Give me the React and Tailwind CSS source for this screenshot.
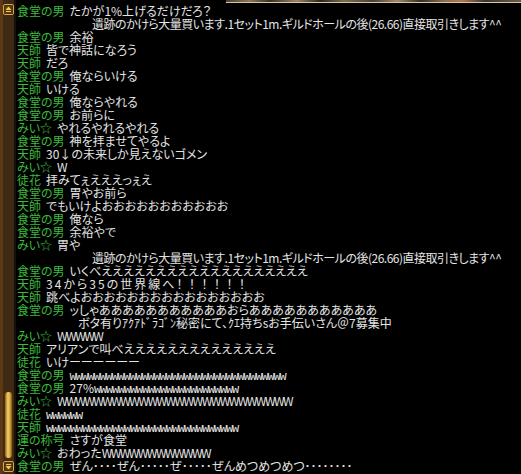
import React from 'react';

const lines = [
  { name: '食堂の男', text: 'たかが1%上げるだけだろ？' },
  { indent: 92, cls: 'tracking-[-0.5px]', text: '遺跡のかけら大量買います.1セット1m.ギルドホールの後(26.66)直接取引きします^^' },
  { name: '食堂の男', text: '余裕' },
  { name: '天師', text: '皆で神話になろう' },
  { name: '天師', text: 'だろ' },
  { name: '食堂の男', text: '俺ならいける' },
  { name: '天師', text: 'いける' },
  { name: '食堂の男', text: '俺ならやれる' },
  { name: '食堂の男', text: 'お前らに' },
  { name: 'みい☆', text: 'やれるやれるやれる' },
  { name: '食堂の男', text: '神を拝ませてやるよ' },
  { name: '天師', text: '30↓の未来しか見えないゴメン' },
  { name: 'みい☆', text: 'W' },
  { name: '徒花', text: '拝みてぇえええっぇえ' },
  { name: '食堂の男', text: '胃やお前ら' },
  { name: '天師', text: 'でもいけよおおおおおおおおおおお' },
  { name: '食堂の男', text: '俺なら' },
  { name: '食堂の男', text: '余裕やで' },
  { name: 'みい☆', text: '胃や' },
  { indent: 92, cls: 'tracking-[-0.5px]', text: '遺跡のかけら大量買います.1セット1m.ギルドホールの後(26.66)直接取引きします^^' },
  { name: '食堂の男', text: 'いくべえええええええええええええええええええ' },
  { name: '天師', cls: 'tracking-[2px]', text: '34から35の世界線へ！！！！！！' },
  { name: '天師', text: '跳べよおおおおおおおおおおおおおおおお' },
  { name: '食堂の男', text: 'ッしゃあああああああああああおらあああああああああああ' },
  { indent: 78, text: 'ボタ有りｱｸｱﾄﾞﾗｺﾞﾝ秘密にて、ｸｴ持ちsお手伝いさん＠7募集中' },
  { name: 'みい☆', text: 'WWWWW' },
  { name: '天師', text: 'アリアンで叫べええええええええええええええ' },
  { name: '徒花', text: 'いけーーーーーー' },
  { name: '食堂の男', text: 'wwwwwwwwwwwwwwwwwwwwwwwwwwwwwwwwwwww' },
  { name: '食堂の男', text: '27%wwwwwwwwwwwwwwwwwwwwwwww' },
  { name: 'みい☆', text: 'WWWWWWWWWWWWWWWWWWWWWWWWWW' },
  { name: '徒花', text: 'wwwwww' },
  { name: '天師', text: 'wwwwwwwwwwwwwwwwwwwwwwwwwwwwwwww' },
  { name: '運の称号', text: 'さすが食堂' },
  { name: 'みい☆', text: 'おわったWWWWWWWWWWWW' },
  { name: '食堂の男', text: 'ぜん････ぜん･････ぜ･････ぜんめつめつめつ････････' },
];

// w の連打は細い等幅で、W は少し詰める。！は全角幅に広げる
const renderText = (t) =>
  t.split(/(w+|W+|！+)/).map((s, i) => {
    if (/^w+$/.test(s)) {
      return (
        <span key={i} className="font-['Liberation_Mono',monospace] tracking-[-1.2px]">
          {s}
        </span>
      );
    }
    if (/^W+$/.test(s)) {
      return (
        <span key={i} className="tracking-[-1.5px]">
          {s}
        </span>
      );
    }
    if (/^！+$/.test(s)) {
      return (
        <span key={i} className="tracking-[6.5px]">
          {s}
        </span>
      );
    }
    return <React.Fragment key={i}>{s}</React.Fragment>;
  });

const ArrowButton = ({ down }) => (
  <svg width="11" height="11" viewBox="0 0 11 11" className="block">
    <rect x="0.5" y="0.5" width="10" height="10" rx="1.5" fill="#3a2608" stroke="#d6a848" />
    <rect x="1.5" y="1.5" width="8" height="8" rx="1" fill="#5a3c10" />
    {down ? (
      <>
        <rect x="3" y="3" width="5" height="1" fill="#f0c860" />
        <path d="M2.5 5 H8.5 L5.5 8.5 Z" fill="#f0c860" />
      </>
    ) : (
      <>
        <path d="M2.5 6 H8.5 L5.5 2.5 Z" fill="#f0c860" />
        <rect x="3" y="7" width="5" height="1" fill="#f0c860" />
      </>
    )}
  </svg>
);

const Scrollbar = () => (
  <div className="w-[16px] h-full flex shrink-0">
    <div className="w-[3px] h-full bg-[#5c3814]" />
    <div className="w-[11px] h-full bg-[#3e2a14] flex flex-col items-center pt-[4px] pb-[2px]">
      <ArrowButton />
      <div className="flex-1 w-full flex flex-col justify-end items-center pb-[2px]">
        <div className="w-[9px] h-[68px] rounded-[4px] border border-[#4a3008] bg-[linear-gradient(90deg,#8a6018,#f2cc68_40%,#d8a840_70%,#7a5410)]" />
      </div>
      <ArrowButton down />
    </div>
    <div className="w-[2px] h-full bg-[#17110a]" />
  </div>
);

const App = () => {
  return (
    <div className="w-[521px] h-[474px] bg-black flex overflow-hidden font-['Noto_Sans_CJK_JP',sans-serif] text-[12px] [font-feature-settings:'palt']">
      <Scrollbar />
      <div className="flex-1 flex flex-col">
        <div className="h-[3px] flex shrink-0">
          <div className="w-[210px]" />
          <div className="flex-1 border-b border-[#d8c8a2] bg-[linear-gradient(90deg,#4a3c2c,#8a7658_8%,#3a3028_15%,#9a8464_24%,#2c2620_32%,#7c6a52_40%,#4c4036_50%,#a08a6a_58%,#362e26_66%,#8c6c4c_74%,#b07850_80%,#3a3430_88%,#6c5c4c)]" />
        </div>
        <div className="pl-[1px] pt-[1px]">
          {lines.map((line, i) => (
            <div key={i} className="h-[13px] leading-[13px] whitespace-nowrap flex" style={line.indent ? { paddingLeft: line.indent - 17 } : undefined}>
              {line.name && <span className="text-[#3cba3c] mr-[5px]">{line.name}</span>}
              <span className={`text-[#e4e4e4] ${line.cls || ''}`}>{renderText(line.text)}</span>
            </div>
          ))}
        </div>
      </div>
    </div>
  );
};

export default App;
